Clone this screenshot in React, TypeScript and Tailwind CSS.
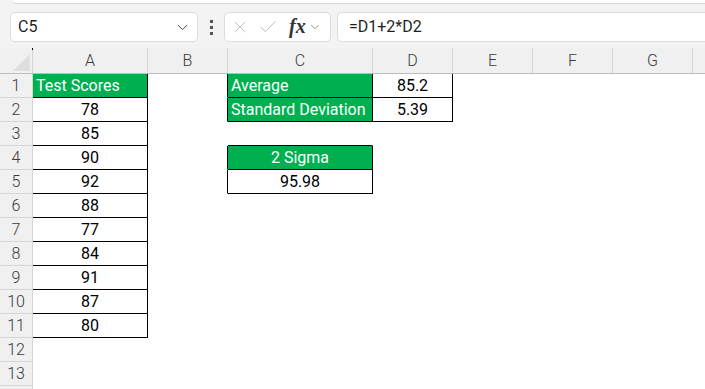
import { ChevronDown, X, Check } from "lucide-react";

type Cell = { text: string; green?: boolean; align?: "left" | "center" };

const columns = [
  { name: "A", width: 115 },
  { name: "B", width: 80 },
  { name: "C", width: 145 },
  { name: "D", width: 80 },
  { name: "E", width: 80 },
  { name: "F", width: 80 },
  { name: "G", width: 80 },
  { name: "", width: 80 },
];

const scores = [78, 85, 90, 92, 88, 77, 84, 91, 87, 80];

const cells: Record<string, Cell> = {
  A1: { text: "Test Scores", green: true, align: "left" },
  C1: { text: "Average", green: true, align: "left" },
  C2: { text: "Standard Deviation", green: true, align: "left" },
  D1: { text: "85.2" },
  D2: { text: "5.39" },
  C4: { text: "2 Sigma", green: true },
  C5: { text: "95.98" },
};
scores.forEach((s, i) => {
  cells["A" + (i + 2)] = { text: String(s) };
});

// ranges with black borders (rows 1-based, cols index into columns)
const ranges = [
  { r1: 1, r2: 11, c1: 0, c2: 0 },
  { r1: 1, r2: 2, c1: 2, c2: 3 },
  { r1: 4, r2: 5, c1: 2, c2: 2 },
];

const bordered = (r: number, c: number) =>
  ranges.some((g) => r >= g.r1 && r <= g.r2 && c >= g.c1 && c <= g.c2);

const rows = Array.from({ length: 14 }, (_, i) => i + 1);

function FormulaBar() {
  return (
    <div className="flex items-center h-[30px] mt-[8px]">
      <div className="ml-[10px] w-[188px] h-[30px] bg-white border border-[#dcdcdc] rounded-[5px] flex items-center pl-[7px] pr-[6px]">
        <span className="text-[16px] text-[#1f1f1f] flex-1">C5</span>
        <ChevronDown size={17} strokeWidth={1.4} className="text-[#444]" />
      </div>
      <div className="w-[26px] flex flex-col items-center gap-[3px]">
        <div className="w-[3px] h-[3px] bg-[#555]" />
        <div className="w-[3px] h-[3px] bg-[#555]" />
        <div className="w-[3px] h-[3px] bg-[#555]" />
      </div>
      <div className="w-[107px] h-[30px] bg-white border border-[#dcdcdc] rounded-[5px] flex items-center pl-[5px]">
        <X size={20} strokeWidth={1} className="text-[#b4b4b4]" />
        <Check size={22} strokeWidth={1} className="text-[#b4b4b4] ml-[7px]" />
        <span
          className="ml-[10px] text-[20px] italic font-bold text-[#333] leading-none pb-[2px]"
          style={{ fontFamily: '"Liberation Serif", "DejaVu Serif", serif' }}
        >
          fx
        </span>
        <ChevronDown size={14} strokeWidth={1.3} className="text-[#777] ml-[2px]" />
      </div>
      <div className="ml-[6px] flex-1 h-[30px] bg-white border border-r-0 border-[#dcdcdc] rounded-l-[5px] flex items-center pl-[11px]">
        <span className="text-[16px] text-[#1f1f1f]">=D1+2*D2</span>
      </div>
    </div>
  );
}

function ColumnHeader() {
  return (
    <div className="flex h-[26px] mt-[6px] border-b border-[#bdbdbd] bg-[#f0f0f0]">
      <div className="relative w-[33px] shrink-0 border-r border-[#d4d4d4]">
        <div className="absolute left-[32px] top-[0px] w-[1px] h-[2px] bg-black" />
        <div
          className="absolute left-[13px] top-[6px] w-[17px] h-[17px] bg-[#dedede]"
          style={{ clipPath: "polygon(100% 0, 100% 100%, 0 100%)" }}
        />
      </div>
      {columns.map((col, i) => (
        <div
          key={i}
          style={{ width: col.width }}
          className="shrink-0 border-r border-[#d4d4d4] flex items-center justify-center text-[16px] font-light text-[#3a3a3a] pt-[1px]"
        >
          {col.name}
        </div>
      ))}
    </div>
  );
}

function SheetRow({ r }: { r: number }) {
  return (
    <div className="flex h-[24px]">
      <div className="w-[33px] shrink-0 bg-[#f0f0f0] border-r border-b border-[#d4d4d4] flex items-center justify-center text-[16px] font-light text-[#3a3a3a]">
        {r < 14 ? r : ""}
      </div>
      {columns.map((col, c) => {
        const cell = cells[col.name + r];
        const b = bordered(r, c) || bordered(r + 1, c);
        const rt = bordered(r, c) || bordered(r, c + 1);
        return (
          <div
            key={c}
            style={{ width: col.width }}
            className={
              "shrink-0 border-b border-r flex items-center text-[16px] leading-none pt-[1px] " +
              (b ? "border-b-black " : "border-b-white ") +
              (rt ? "border-r-black " : "border-r-white ") +
              (cell?.green ? "bg-[#00b050] text-white " : "bg-white text-black ") +
              (cell?.align === "left" ? "justify-start pl-[3px]" : "justify-center")
            }
          >
            {cell?.text}
          </div>
        );
      })}
    </div>
  );
}

export default function App() {
  return (
    <div
      className="w-[705px] h-[389px] overflow-hidden bg-[#f3f3f3]"
      style={{ fontFamily: 'Roboto, "Liberation Sans", sans-serif' }}
    >
      <div className="ml-[12px] h-[4px] bg-white border-b border-[#d8d8d8] rounded-bl-[4px]" />
      <FormulaBar />
      <ColumnHeader />
      {rows.map((r) => (
        <SheetRow key={r} r={r} />
      ))}
    </div>
  );
}
